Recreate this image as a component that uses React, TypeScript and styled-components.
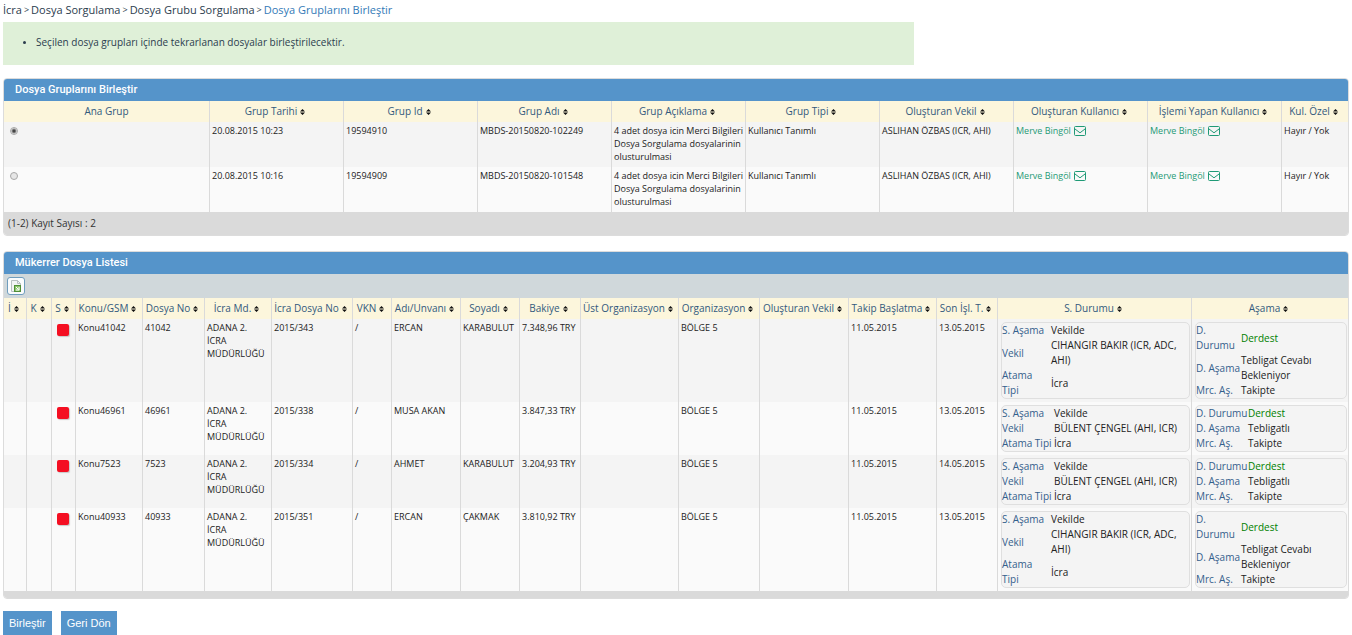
import React from "react";
import styled, { createGlobalStyle } from "styled-components";

const Global = createGlobalStyle`
  *, *::before, *::after { box-sizing: border-box; }
  body {
    margin: 0;
    background: #fff;
    color: #222;
    font-family: "Open Sans", "Noto Sans", sans-serif;
    font-size: 10px;
  }
`;

const Page = styled.main`
  padding: 0 3px;
`;

const Breadcrumb = styled.nav`
  display: flex;
  gap: 2px;
  height: 22px;
  line-height: 20px;
  font-size: 11px;
  white-space: nowrap;
`;

const Crumb = styled.a<{ $current?: boolean }>`
  color: ${(p) => (p.$current ? "#337ab7" : "#2b3c4e")};
  text-decoration: none;
`;

const Separator = styled.span`
  color: #2b3c4e;
  font-size: 9px;
`;

const Notice = styled.ul`
  margin: 0 0 13px;
  padding: 12px 12px 12px 33px;
  max-width: 911px;
  min-height: 43px;
  background: #dff0d8;
  color: #2b3c4e;
  font-size: 10px;
  line-height: 17px;
  & li::marker { font-size: 8px; }
`;

const Panel = styled.section`
  margin-bottom: 15px;
  border: 1px solid #dcdcdc;
  border-radius: 4px;
  overflow: hidden;
`;

const PanelTitle = styled.h2`
  margin: 0;
  padding-left: 11px;
  background: #5594ca;
  color: #fff;
  font-family: Roboto, "Open Sans", sans-serif;
  font-size: 11px;
  font-weight: 500;
  line-height: 22px;
`;

const Toolbar = styled.div`
  display: flex;
  align-items: center;
  height: 24px;
  padding-left: 3px;
  background: #d0d8db;
`;

const IconButton = styled.button`
  display: grid;
  place-items: center;
  width: 18px;
  height: 18px;
  padding: 0;
  border: 1px solid #6f9dbd;
  border-radius: 3px;
  background: #fafcfd;
`;

const PanelFooter = styled.div<{ $height: number }>`
  height: ${(p) => p.$height}px;
  padding-left: 4px;
  background: #dadada;
  color: #333;
  line-height: ${(p) => p.$height}px;
`;

const Grid = styled.table`
  width: 100%;
  table-layout: fixed;
  border-collapse: separate;
  border-spacing: 0;
`;

const HeadCell = styled.th`
  height: 21px;
  padding: 0;
  border-right: 1px solid #dadada;
  background: #fcf6dc;
  color: #33597c;
  font-size: 10px;
  font-weight: 400;
  line-height: 21px;
  white-space: nowrap;
  &:last-child { border-right: 0; }
`;

const Row = styled.tr`
  background: #fafafa;
  &:nth-child(odd) { background: #f4f4f4; }
`;

const Cell = styled.td<{ $boxed?: boolean }>`
  padding: ${(p) => (p.$boxed ? "3px 1px 3px 3px" : "2px 2px 4px")};
  border-right: 1px solid #dadada;
  font-size: 9px;
  line-height: 13px;
  vertical-align: top;
  white-space: pre-line;
  &:last-child { border-right: 0; }
`;

const Radio = styled.input`
  appearance: none;
  display: block;
  width: 8px;
  height: 8px;
  margin: 3px 4px;
  border: 1px solid #a8a8a8;
  border-radius: 50%;
  background: #e6e6e6;
  &:checked { background: radial-gradient(circle, #444 0 1px, #e4e4e4 3px); }
`;

const UserLink = styled.a`
  display: inline-flex;
  align-items: center;
  gap: 3px;
  color: #1f9a76;
  text-decoration: none;
`;

const Flag = styled.span`
  display: block;
  width: 12px;
  height: 12px;
  margin: 3px 0 0 3px;
  border-radius: 2px;
  background: #f40f22;
  box-shadow: 1px 1px 1px #c8c8c8;
`;

const Details = styled.dl<{ $label: number }>`
  display: grid;
  grid-template-columns: ${(p) => p.$label}px 1fr;
  align-items: center;
  margin: 0;
  border: 1px solid #dfdfdf;
  border-radius: 5px;
  background: #f4f4f4;
  font-size: 10px;
  line-height: 15px;
`;

const Term = styled.dt<{ $nowrap?: boolean }>`
  color: #34608c;
  white-space: ${(p) => (p.$nowrap ? "nowrap" : "normal")};
`;

const Value = styled.dd<{ $green?: boolean }>`
  margin: 0;
  color: ${(p) => (p.$green ? "#008000" : "#222")};
`;

const Actions = styled.div`
  display: flex;
  gap: 9px;
  margin-top: -3px;
`;

const Button = styled.button`
  height: 24px;
  padding: 0 6px;
  border: 0;
  background: #5594ca;
  color: #fff;
  font-family: "Liberation Sans", Arial, sans-serif;
  font-size: 11px;
`;

const SortSvg = styled.svg`
  margin: 0 3px;
  vertical-align: 0;
`;

const SortIcon = () => (
  <SortSvg width="5" height="6" viewBox="0 0 5 6" aria-hidden="true">
    <path d="M2.500 0 5 2.600H0zM2.500 6 5 3.400H0z" fill="#111" />
  </SortSvg>
);

const MailIcon = () => (
  <svg width="12" height="10" viewBox="0 0 12 10" fill="none" stroke="#1f9a76" aria-hidden="true">
    <rect x="0.5" y="0.5" width="11" height="9" rx="1" />
    <path d="M1 3 6 6.8 11 3" />
  </svg>
);

const ExportIcon = () => (
  <svg width="12" height="14" viewBox="0 0 12 14" aria-hidden="true">
    <path d="M1.5 1.5h6l3 3v8h-9z" fill="#f2f4f4" stroke="#b9c0c2" />
    <path d="M7.5 1.5v3h3" fill="none" stroke="#b9c0c2" />
    <rect x="4.500" y="6.500" width="6" height="6" fill="#8cc56c" stroke="#4f8f37" />
    <path d="M6 8l2.500 2.500M9 8v3h-3" stroke="#fff" fill="none" />
  </svg>
);

type Column = { name: string; width?: string; fixed?: boolean };

const groupColumns: Column[] = [
  { name: "Ana Grup", fixed: true },
  ...["Grup Tarihi", "Grup Id", "Grup Adı", "Grup Açıklama", "Grup Tipi", "Oluşturan Vekil", "Oluşturan Kullanıcı", "İşlemi Yapan Kullanıcı"].map(
    (name) => ({ name, width: "134px" })
  ),
  { name: "Kul. Özel", width: "66px" },
];

const groups = [
  { date: "20.08.2015 10:23", id: "19594910", name: "MBDS-20150820-102249" },
  { date: "20.08.2015 10:16", id: "19594909", name: "MBDS-20150820-101548" },
];

const fileColumns: Column[] = (
  [
    ["İ", 23], ["K", 25], ["S", 24], ["Konu/GSM", 67], ["Dosya No", 62], ["İcra Md.", 67],
    ["İcra Dosya No", 81], ["VKN", 39], ["Adı/Unvanı", 69], ["Soyadı", 59], ["Bakiye", 61],
    ["Üst Organizasyon", 98], ["Organizasyon", 81], ["Oluşturan Vekil", 89],
    ["Takip Başlatma", 88], ["Son İşl. T.", 61], ["S. Durumu", 194], ["Aşama", 156],
  ] as [string, number][]
).map(([name, w]) => ({ name, width: `${w}px` }));

const files = [
  { no: "41042", icra: "2015/343", first: "ERCAN", last: "KARABULUT", amount: "7.348,96 TRY", date: "13.05.2015", long: true },
  { no: "46961", icra: "2015/338", first: "MUSA AKAN", last: "", amount: "3.847,33 TRY", date: "13.05.2015", long: false },
  { no: "7523", icra: "2015/334", first: "AHMET", last: "KARABULUT", amount: "3.204,93 TRY", date: "14.05.2015", long: false },
  { no: "40933", icra: "2015/351", first: "ERCAN", last: "ÇAKMAK", amount: "3.810,92 TRY", date: "13.05.2015", long: true },
];

const office = "ADANA 2.\nİCRA\nMÜDÜRLÜĞÜ";

const Columns = ({ columns }: { columns: Column[] }) => (
  <>
    <colgroup>
      {columns.map((c) => (
        <col key={c.name} style={{ width: c.width }} />
      ))}
    </colgroup>
    <thead>
      <tr>
        {columns.map((c) => (
          <HeadCell key={c.name} scope="col">
            {c.name}
            {!c.fixed && <SortIcon />}
          </HeadCell>
        ))}
      </tr>
    </thead>
  </>
);

const User = () => (
  <UserLink href="#">
    Merve Bingöl <MailIcon />
  </UserLink>
);

export default function App() {
  return (
    <>
      <Global />
      <Page>
        <Breadcrumb>
          <Crumb href="#">İcra</Crumb>
          <Separator>&gt;</Separator>
          <Crumb href="#">Dosya Sorgulama</Crumb>
          <Separator>&gt;</Separator>
          <Crumb href="#">Dosya Grubu Sorgulama</Crumb>
          <Separator>&gt;</Separator>
          <Crumb href="#" $current>Dosya Gruplarını Birleştir</Crumb>
        </Breadcrumb>
        <Notice>
          <li>Seçilen dosya grupları içinde tekrarlanan dosyalar birleştirilecektir.</li>
        </Notice>

        <Panel>
          <PanelTitle>Dosya Gruplarını Birleştir</PanelTitle>
          <Grid>
            <Columns columns={groupColumns} />
            <tbody>
              {groups.map((g, i) => (
                <Row key={g.id}>
                  <Cell>
                    <Radio type="radio" name="group" aria-label={g.name} defaultChecked={i === 0} />
                  </Cell>
                  <Cell>{g.date}</Cell>
                  <Cell>{g.id}</Cell>
                  <Cell>{g.name}</Cell>
                  <Cell>4 adet dosya icin Merci Bilgileri Dosya Sorgulama dosyalarinin olusturulmasi</Cell>
                  <Cell>Kullanıcı Tanımlı</Cell>
                  <Cell>ASLIHAN ÖZBAS (ICR, AHI)</Cell>
                  <Cell><User /></Cell>
                  <Cell><User /></Cell>
                  <Cell>Hayır / Yok</Cell>
                </Row>
              ))}
            </tbody>
          </Grid>
          <PanelFooter $height={23}>(1-2) Kayıt Sayısı : 2</PanelFooter>
        </Panel>

        <Panel>
          <PanelTitle>Mükerrer Dosya Listesi</PanelTitle>
          <Toolbar>
            <IconButton type="button" aria-label="Excel"><ExportIcon /></IconButton>
          </Toolbar>
          <Grid>
            <Columns columns={fileColumns} />
            <tbody>
              {files.map((f) => (
                <Row key={f.no}>
                  <Cell />
                  <Cell />
                  <Cell><Flag /></Cell>
                  <Cell>Konu{f.no}</Cell>
                  <Cell>{f.no}</Cell>
                  <Cell>{office}</Cell>
                  <Cell>{f.icra}</Cell>
                  <Cell>/</Cell>
                  <Cell>{f.first}</Cell>
                  <Cell>{f.last}</Cell>
                  <Cell>{f.amount}</Cell>
                  <Cell />
                  <Cell>BÖLGE 5</Cell>
                  <Cell />
                  <Cell>11.05.2015</Cell>
                  <Cell>{f.date}</Cell>
                  <Cell $boxed>
                    <Details $label={f.long ? 49 : 52}>
                      <Term>S. Aşama</Term>
                      <Value>Vekilde</Value>
                      <Term>Vekil</Term>
                      <Value>{f.long ? "CIHANGIR BAKIR (ICR, ADC, AHI)" : "BÜLENT ÇENGEL (AHI, ICR)"}</Value>
                      <Term $nowrap={!f.long}>Atama Tipi</Term>
                      <Value>İcra</Value>
                    </Details>
                  </Cell>
                  <Cell $boxed>
                    <Details $label={f.long ? 45 : 52}>
                      <Term $nowrap={!f.long}>D. Durumu</Term>
                      <Value $green>Derdest</Value>
                      <Term>D. Aşama</Term>
                      <Value>{f.long ? "Tebligat Cevabı Bekleniyor" : "Tebligatlı"}</Value>
                      <Term>Mrc. Aş.</Term>
                      <Value>Takipte</Value>
                    </Details>
                  </Cell>
                </Row>
              ))}
            </tbody>
          </Grid>
          <PanelFooter $height={7} />
        </Panel>

        <Actions>
          <Button type="button">Birleştir</Button>
          <Button type="button">Geri Dön</Button>
        </Actions>
      </Page>
    </>
  );
}
